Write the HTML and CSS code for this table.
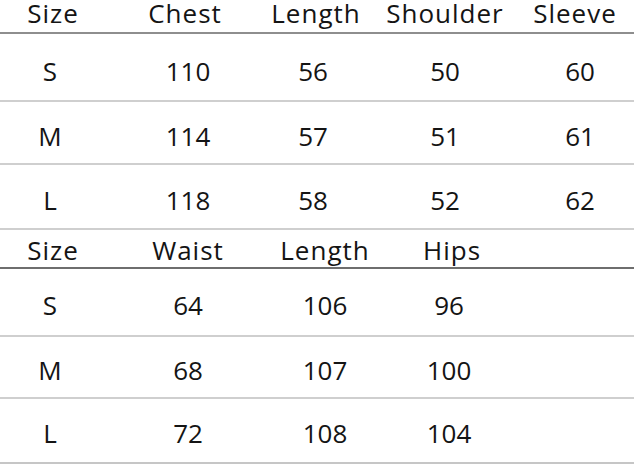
FILE: index.html
```html
<!DOCTYPE html>
<html lang="en">
<head>
<meta charset="utf-8">
<title>Size chart</title>
<link rel="stylesheet" href="styles.css">
</head>
<body>
<div class="chart">
  <section class="table top">
    <div class="row head h1"><span>Size</span><span>Chest</span><span>Length</span><span>Shoulder</span><span>Sleeve</span></div>
    <div class="row body b1 r1"><span>S</span><span>110</span><span>56</span><span>50</span><span>60</span></div>
    <div class="row body b1 r2"><span>M</span><span>114</span><span>57</span><span>51</span><span>61</span></div>
    <div class="row body b1 r3"><span>L</span><span>118</span><span>58</span><span>52</span><span>62</span></div>
  </section>
  <section class="table bottom">
    <div class="row head h2"><span>Size</span><span>Waist</span><span>Length</span><span>Hips</span></div>
    <div class="row body b2 s1"><span>S</span><span>64</span><span>106</span><span>96</span></div>
    <div class="row body b2 s2"><span>M</span><span>68</span><span>107</span><span>100</span></div>
    <div class="row body b2 s3"><span>L</span><span>72</span><span>108</span><span>104</span></div>
  </section>
</div>
</body>
</html>
```
FILE: styles.css
```css
html, body {
  margin: 0;
  padding: 0;
  background: #ffffff;
}
body {
  width: 634px;
  height: 468px;
  overflow: hidden;
  font-family: "Open Sans", "Noto Sans", sans-serif;
  color: #141414;
}
.chart {
  display: flex;
  flex-direction: column;
}
.row {
  display: grid;
  justify-items: center;
  align-items: start;
  box-sizing: border-box;
  white-space: nowrap;
}
.head {
  font-size: 26px;
  line-height: 26px;
  letter-spacing: 1px;
}
.body {
  font-size: 26px;
  line-height: 30px;
  border-bottom: 2px solid #cfcfcf;
}
.h1 {
  grid-template-columns: 106px 158px 104px 154px 106px;
  height: 34px;
  padding-top: 0;
  border-bottom: 2px solid #8e8e8e;
}
.b1 {
  grid-template-columns: 100px 176px 74px 190px 80px;
}
.r1 { height: 68px; padding-top: 22px; }
.r2 { height: 63px; padding-top: 19px; }
.r3 { height: 65px; padding-top: 20px; }

.h2 {
  grid-template-columns: 106px 164px 110px 144px;
  height: 39px;
  padding-top: 7px;
  border-bottom: 2px solid #6e6e6e;
}
.b2 {
  grid-template-columns: 100px 176px 98px 150px;
}
.s1 { height: 68px; padding-top: 21px; }
.s2 { height: 62px; padding-top: 18px; }
.s3 { height: 65px; padding-top: 19px; border-bottom-color: #c6c6c6; }
```
